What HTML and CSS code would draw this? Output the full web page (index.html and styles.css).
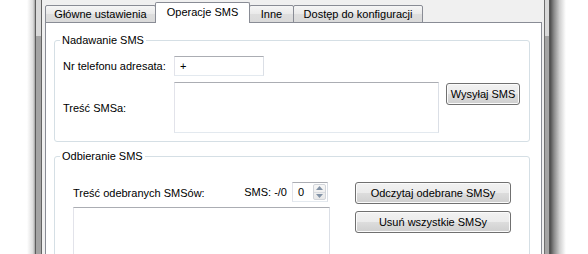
FILE: index.html
```html
<!DOCTYPE html>
<html lang="pl">
<head>
<meta charset="utf-8">
<title>Operacje SMS</title>
<link rel="stylesheet" href="styles.css">
</head>
<body>
<div class="desk">
  <div class="shadow-l"></div>
  <div class="frame frame-l"></div>
  <div class="client">
    <div class="tabs">
      <div class="tab tab-main">Główne ustawienia</div>
      <div class="tab tab-sms active">Operacje SMS</div>
      <div class="tab tab-other">Inne</div>
      <div class="tab tab-access">Dostęp do konfiguracji</div>
    </div>
    <div class="pane">
      <fieldset class="group group-send">
        <legend>Nadawanie SMS</legend>
        <div class="send-grid">
          <label class="lbl">Nr telefonu adresata:</label>
          <div class="textbox phone">+</div>
          <div></div>
          <label class="lbl">Treść SMSa:</label>
          <div class="textbox message"></div>
          <button class="btn btn-send">Wysyłaj SMS</button>
        </div>
      </fieldset>
      <fieldset class="group group-recv">
        <legend>Odbieranie SMS</legend>
        <div class="recv">
          <div class="recv-left">
            <div class="recv-head">
              <span class="lbl grow">Treść odebranych SMSów:</span>
              <span class="lbl">SMS: -/0</span>
              <div class="spin">
                <span class="spin-val">0</span>
                <div class="spin-btns">
                  <span class="spin-btn"><svg width="7" height="4" viewBox="0 0 7 4"><path d="M0 4 L3.5 0 L7 4 Z" fill="#8292a6"/></svg></span>
                  <span class="spin-btn"><svg width="7" height="4" viewBox="0 0 7 4"><path d="M0 0 L3.5 4 L7 0 Z" fill="#8292a6"/></svg></span>
                </div>
              </div>
            </div>
            <div class="textbox inbox"></div>
          </div>
          <div class="recv-right">
            <button class="btn btn-wide">Odczytaj odebrane SMSy</button>
            <button class="btn btn-wide">Usuń wszystkie SMSy</button>
          </div>
        </div>
      </fieldset>
    </div>
  </div>
  <div class="frame frame-r"></div>
  <div class="shadow-r"></div>
  <div class="rest"></div>
</div>
</body>
</html>
```

FILE: styles.css
```css
html, body {
  margin: 0;
  padding: 0;
  background: #ffffff;
}
body {
  width: 588px;
  height: 254px;
  overflow: hidden;
  font-family: "Liberation Sans", Arial, sans-serif;
  font-size: 11px;
  color: #000;
}
.desk {
  display: flex;
  height: 254px;
}
.shadow-l {
  width: 35px;
  flex: 0 0 35px;
  background: linear-gradient(to right, #ffffff 0, #ffffff 27px, #dcdcdc 33px, #a0a0a0 35px);
}
.frame {
  box-sizing: border-box;
  background: linear-gradient(#d9d9d9 0, #d9d9d9 36px, #a4a4a4 36px, #a4a4a4 100%);
}
.frame-l {
  width: 7px;
  flex: 0 0 7px;
  border-left: 1px solid #5c5c5c;
  border-right: 1px solid #646464;
}
.frame-r {
  width: 6px;
  flex: 0 0 6px;
  border-left: 1px solid #6e6e6e;
  border-right: 1px solid #575757;
}
.shadow-r {
  width: 16px;
  flex: 0 0 16px;
  background: linear-gradient(to right, #4a4a4a 0, #8a8a8a 25%, #cfcfcf 60%, #f4f4f4 90%, #ffffff 100%);
}
.rest {
  flex: 1;
  background: #ffffff;
}
.client {
  box-sizing: border-box;
  width: 502px;
  flex: 0 0 502px;
  background: #f0f0f0;
  padding: 0 2px 0 3px;
  display: flex;
  flex-direction: column;
}
.tabs {
  display: flex;
  align-items: flex-end;
  height: 23px;
  margin-bottom: -1px;
  position: relative;
  z-index: 1;
}
.tab {
  box-sizing: border-box;
  height: 18px;
  border: 1px solid #898c95;
  border-radius: 2px 2px 0 0;
  background: linear-gradient(#f6f6f6, #e9e9e9 50%, #dedede 51%, #dadada);
  display: flex;
  align-items: center;
  justify-content: center;
  white-space: nowrap;
  padding-bottom: 1px;
}
.tab + .tab {
  margin-left: -1px;
}
.tab.active {
  height: 21px;
  background: #ffffff;
  border-bottom: none;
  padding-bottom: 2px;
  position: relative;
  z-index: 2;
}
.tab-main { width: 111px; }
.tab-sms { width: 95px; }
.tab-other { width: 45px; }
.tab-access { width: 130px; }
.pane {
  flex: 1;
  box-sizing: border-box;
  background: #ffffff;
  border: 1px solid #898c95;
  border-bottom: none;
  padding: 10px 11px 0 8px;
  overflow: hidden;
}
.group {
  margin: 0;
  min-width: 0;
  border: 1px solid #d5dfe5;
  border-radius: 3px;
  padding: 9px 8px 8px 5px;
}
.group legend {
  padding: 0 2px;
  line-height: 14px;
}
.group-recv {
  margin-top: 7px;
  padding-top: 19px;
  height: 200px;
}
.send-grid {
  margin-left: 3px;
  display: grid;
  grid-template-columns: 111px 265px 81px;
  grid-template-rows: 20px 51px;
  row-gap: 6px;
  align-items: center;
}
.lbl {
  white-space: nowrap;
}
.textbox {
  box-sizing: border-box;
  background: #ffffff;
  border: 1px solid #dbdfe6;
  border-top-color: #abadb3;
  border-left-color: #e2e3ea;
  border-bottom-color: #e3e9ef;
}
.phone {
  width: 90px;
  height: 20px;
  line-height: 18px;
  padding-left: 5px;
}
.message {
  width: 265px;
  height: 51px;
}
.btn {
  box-sizing: border-box;
  font-family: "Liberation Sans", Arial, sans-serif;
  font-size: 11px;
  color: #000;
  height: 22px;
  padding: 0;
  border: 1px solid #707070;
  border-radius: 3px;
  background: linear-gradient(#f2f2f2 0, #ebebeb 50%, #dddddd 50%, #cfcfcf 100%);
  box-shadow: inset 0 0 0 1px #fbfbfb;
}
.btn-send {
  width: 74px;
  justify-self: end;
  align-self: start;
  margin-top: 1px;
}
.recv {
  margin-left: 13px;
  display: flex;
  align-items: flex-start;
}
.recv-left {
  width: 257px;
  display: flex;
  flex-direction: column;
}
.recv-head {
  height: 20px;
  display: flex;
  align-items: center;
  padding-right: 2px;
}
.grow {
  flex: 1;
  padding-top: 2px;
}
.spin {
  box-sizing: border-box;
  margin-left: 5px;
  width: 36px;
  height: 20px;
  background: #ffffff;
  border: 1px solid #dbdfe6;
  border-top-color: #abadb3;
  border-left-color: #e2e3ea;
  border-bottom-color: #e3e9ef;
  display: flex;
  align-items: center;
}
.spin-val {
  flex: 1;
  padding-left: 5px;
}
.spin-btns {
  display: flex;
  flex-direction: column;
  width: 13px;
  margin-right: 1px;
  box-sizing: border-box;
  border: 1px solid #d2d5da;
  border-radius: 2px;
  height: 16px;
  background: linear-gradient(#f7f7f7, #e8e8e8);
}
.spin-btn {
  flex: 1;
  display: flex;
  align-items: center;
  justify-content: center;
}
.spin-btn + .spin-btn {
  border-top: 1px solid #d8dbe0;
}
.inbox {
  margin-top: 5px;
  width: 257px;
  height: 70px;
}
.recv-right {
  margin-left: 25px;
  display: flex;
  flex-direction: column;
  gap: 7px;
}
.btn-wide {
  width: 156px;
}
```
